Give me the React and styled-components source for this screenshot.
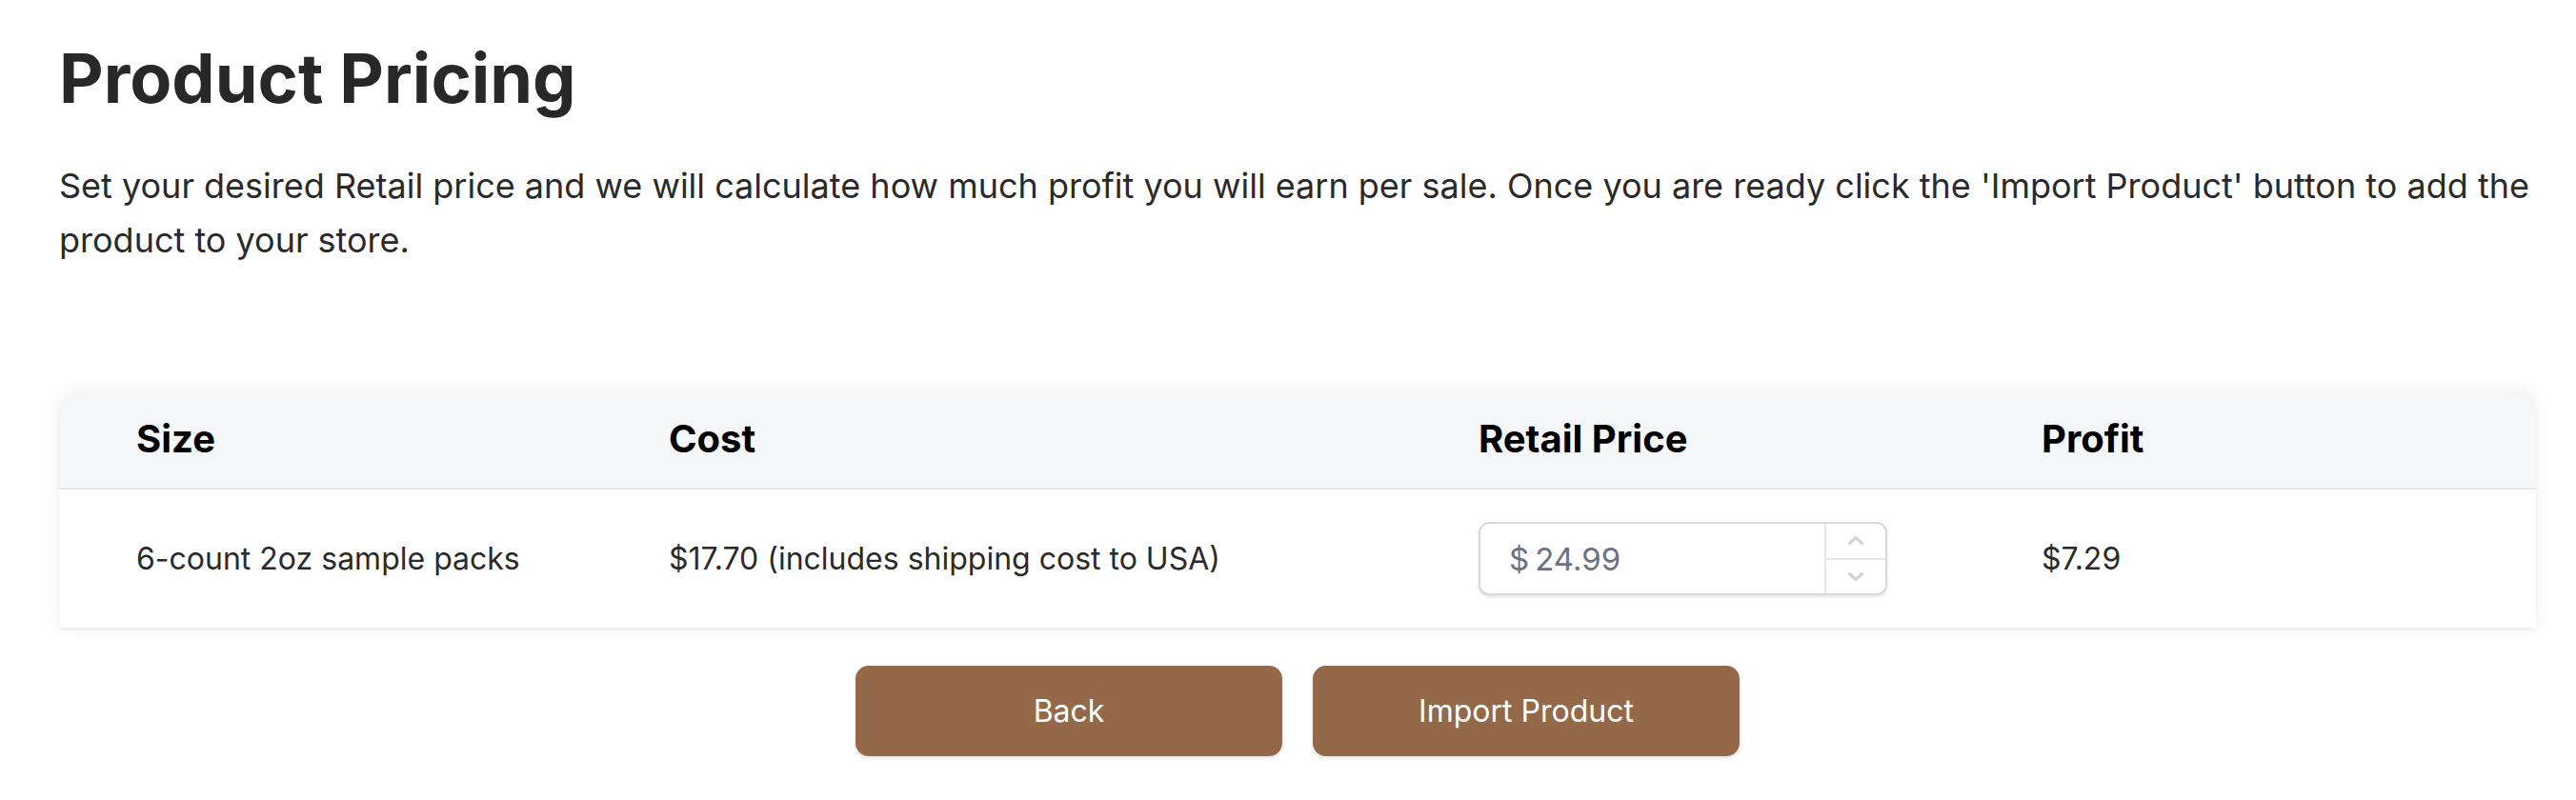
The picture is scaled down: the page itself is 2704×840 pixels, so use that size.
import React from "react";
import styled, { createGlobalStyle } from "styled-components";

const Global = createGlobalStyle`
  html, body { margin: 0; padding: 0; background: #ffffff; }
  body { font-family: Inter, "Noto Sans", "Liberation Sans", sans-serif; -webkit-font-smoothing: antialiased; }
  * { box-sizing: border-box; }
`;

const Page = styled.main`
  padding: 42px 42px 40px 62px;
  color: #292929;
`;

const Title = styled.h1`
  margin: 0;
  font-size: 72px;
  line-height: 80px;
  font-weight: 700;
  color: #282828;
`;

const Intro = styled.p`
  margin: 45px 0 0;
  font-size: 36px;
  line-height: 57px;
  color: #2a2a2a;
`;

const Card = styled.section`
  margin-top: 128px;
  border-radius: 25px 25px 0 0;
  background: #ffffff;
  box-shadow: 0 0 22px rgba(0, 0, 0, 0.06), 0 2px 4px rgba(0, 0, 0, 0.06);
`;

const Row = styled.div`
  display: grid;
  grid-template-columns: 559px 850px 591px 1fr;
  align-items: center;
  height: ${(p) => (p.$head ? "105px" : "145px")};
  background: ${(p) => (p.$head ? "#f5f6f8" : "#ffffff")};
  border-bottom: ${(p) => (p.$head ? "2px solid #e5e7eb" : "none")};
  border-radius: ${(p) => (p.$head ? "25px 25px 0 0" : "0")};
`;

const HeadCell = styled.div`
  padding-left: 81px;
  font-size: 40px;
  font-weight: 700;
  color: #000000;
`;

const Cell = styled.div`
  padding-left: 81px;
  font-size: 32px;
  color: #2a2a2a;
`;

const PriceBox = styled.div`
  display: flex;
  align-items: stretch;
  width: 429px;
  height: 77px;
  border: 2px solid #d6d8dc;
  border-radius: 11px;
  background: #ffffff;
  box-shadow: 0 2px 3px rgba(0, 0, 0, 0.1);
  overflow: hidden;
`;

const Prefix = styled.span`
  display: flex;
  align-items: center;
  padding-left: 30px;
  font-size: 33px;
  color: #6b7280;
`;

const PriceInput = styled.input`
  flex: 1;
  min-width: 0;
  border: none;
  outline: none;
  padding: 0 0 0 6px;
  font-family: inherit;
  font-size: 33px;
  color: #6b7280;
  background: transparent;
`;

const Spinner = styled.div`
  display: flex;
  flex-direction: column;
  width: 64px;
  border-left: 2px solid #e5e7eb;
`;

const SpinBtn = styled.button`
  flex: 1;
  display: flex;
  align-items: center;
  justify-content: center;
  border: none;
  background: transparent;
  padding: 0;
  & + & { border-top: 2px solid #e5e7eb; }
`;

const Actions = styled.div`
  display: flex;
  justify-content: center;
  gap: 32px;
  margin-top: 40px;
`;

const Button = styled.button`
  width: 448px;
  height: 95px;
  border: none;
  border-radius: 14px;
  background: #94694a;
  color: #ffffff;
  font-family: inherit;
  font-size: 32px;
  box-shadow: 0 2px 4px rgba(0, 0, 0, 0.12);
  cursor: pointer;
`;

const Chevron = ({ up }) => (
  <svg width="20" height="13" viewBox="0 0 20 13" fill="none">
    <path
      d={up ? "M3.5 9.5 L10 3.5 L16.5 9.5" : "M3.5 3.5 L10 9.5 L16.5 3.5"}
      stroke="#d1d5db"
      strokeWidth="3.4"
      strokeLinecap="round"
      strokeLinejoin="round"
    />
  </svg>
);

export default function App() {
  return (
    <>
      <Global />
      <Page>
        <Title>Product Pricing</Title>
        <Intro>
          Set your desired Retail price and we will calculate how much profit you will earn per sale. Once you are
          ready click the 'Import Product' button to add the product to your store.
        </Intro>
        <Card>
          <Row $head>
            <HeadCell>Size</HeadCell>
            <HeadCell>Cost</HeadCell>
            <HeadCell>Retail Price</HeadCell>
            <HeadCell>Profit</HeadCell>
          </Row>
          <Row>
            <Cell>6-count 2oz sample packs</Cell>
            <Cell>$17.70 (includes shipping cost to USA)</Cell>
            <Cell>
              <PriceBox>
                <Prefix>$</Prefix>
                <PriceInput type="text" defaultValue="24.99" />
                <Spinner>
                  <SpinBtn aria-label="Increase">
                    <Chevron up />
                  </SpinBtn>
                  <SpinBtn aria-label="Decrease">
                    <Chevron />
                  </SpinBtn>
                </Spinner>
              </PriceBox>
            </Cell>
            <Cell>$7.29</Cell>
          </Row>
        </Card>
        <Actions>
          <Button>Back</Button>
          <Button>Import Product</Button>
        </Actions>
      </Page>
    </>
  );
}
